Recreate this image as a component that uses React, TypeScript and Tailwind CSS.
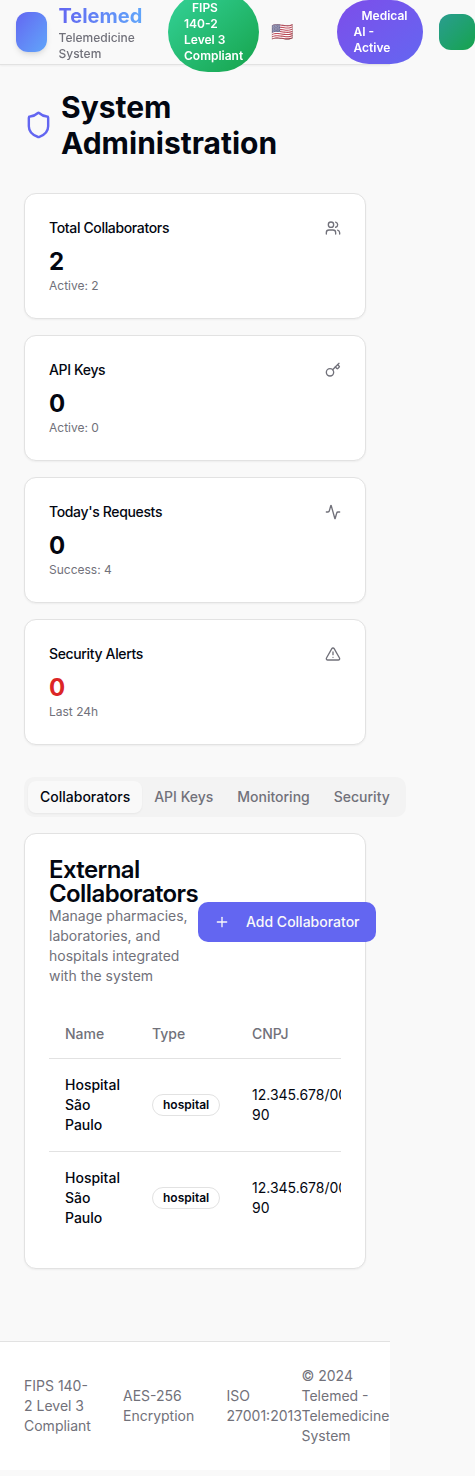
import React from 'react';
import { Activity, Key, Plus, Shield, TriangleAlert, Users, type LucideIcon } from 'lucide-react';

type Stat = { label: string; value: string; note: string; icon: LucideIcon; alert?: boolean };

const stats: Stat[] = [
  { label: 'Total Collaborators', value: '2', note: 'Active: 2', icon: Users },
  { label: 'API Keys', value: '0', note: 'Active: 0', icon: Key },
  { label: "Today's Requests", value: '0', note: 'Success: 4', icon: Activity },
  { label: 'Security Alerts', value: '0', note: 'Last 24h', icon: TriangleAlert, alert: true },
];

const tabs = ['Collaborators', 'API Keys', 'Monitoring', 'Security'];

const collaborators = [
  { id: 1, name: 'Hospital São Paulo', type: 'hospital', cnpj: '12.345.678/0001-90' },
  { id: 2, name: 'Hospital São Paulo', type: 'hospital', cnpj: '12.345.678/0001-90' },
];

function Header() {
  return (
    <header className="h-[65px] w-[390px] border-b border-[#e2e2e2] bg-[#f9f9f9]/95 shadow-[0_1px_2px_rgba(0,0,0,0.05)] backdrop-blur">
      <div className="flex h-16 w-[475px] items-center pl-4">
        <div className="h-10 w-[31px] shrink-0 rounded-xl bg-linear-to-br from-[#6366f1] to-[#60a5fa] shadow-md" />
        <div className="ml-[11.5px] w-[109.5px] shrink-0">
          <h1 className="w-max bg-linear-to-r from-[#6366f1] to-[#60a5fa] bg-clip-text text-xl font-bold text-transparent">
            Telemed
          </h1>
          <p className="w-[80px] text-xs font-medium text-[#71717a]">Telemedicine System</p>
        </div>
        <div className="w-[91px] shrink-0 rounded-[40px] bg-linear-to-br from-[#34d399] to-[#16a34a] px-4 py-2 text-xs font-semibold text-white">
          <span className="mr-2" />
          FIPS 140-2 Level 3 Compliant
        </div>
        <span className="ml-3 w-[66px] shrink-0 text-lg opacity-80">🇺🇸</span>
        <div className="w-[86px] shrink-0 rounded-[32px] bg-linear-to-br from-[#7c4dea] to-[#6366f1] py-2 pl-[16.5px] text-xs font-semibold text-white">
          <span className="mr-2" />
          Medical
          <br />
          AI -
          <br />
          Active
        </div>
        <div className="ml-4 size-9 shrink-0 rounded-xl bg-linear-to-br from-[#2a9d8f] to-[#16a34a]" />
      </div>
    </header>
  );
}

function StatCard({ stat }: { stat: Stat }) {
  const Icon = stat.icon;
  return (
    <div className="rounded-xl border border-[#e2e2e2] bg-white p-6 shadow-[0_1px_2px_rgba(0,0,0,0.05)]">
      <div className="flex items-center justify-between pb-2">
        <h3 className="text-sm font-medium tracking-tight">{stat.label}</h3>
        <Icon className="size-4 text-[#71717a]" />
      </div>
      <div className={stat.alert ? 'text-2xl font-bold text-[#dc2626]' : 'text-2xl font-bold'}>{stat.value}</div>
      <p className="text-xs text-[#71717a]">{stat.note}</p>
    </div>
  );
}

function Tabs() {
  return (
    <div className="mt-8 flex h-10 w-[382px] items-center rounded-[10px] bg-[#f3f3f3] p-1">
      {tabs.map((tab, i) => (
        <button
          key={tab}
          className={
            i === 0
              ? 'rounded-lg bg-[#f9f9f9] px-3 py-1.5 text-sm font-medium text-[#030711] shadow-[0_1px_2px_rgba(0,0,0,0.05)]'
              : 'rounded-lg px-3 py-1.5 text-sm font-medium text-[#71717a]'
          }
        >
          {tab}
        </button>
      ))}
    </div>
  );
}

function CollaboratorsCard() {
  return (
    <section className="mt-4 rounded-xl border border-[#e2e2e2] bg-white p-6 shadow-[0_1px_2px_rgba(0,0,0,0.05)]">
      <div className="flex items-center">
        <div className="w-[149px] shrink-0">
          <h3 className="text-2xl leading-none font-semibold tracking-tight">External Collaborators</h3>
          <p className="text-sm text-[#71717a]">Manage pharmacies, laboratories, and hospitals integrated with the system</p>
        </div>
        <button className="flex h-10 w-[178px] shrink-0 items-center gap-4 rounded-[10px] bg-[#6366f1] px-4 text-sm font-medium whitespace-nowrap text-[#f9f9f9]">
          <Plus className="size-4 shrink-0" />
          Add Collaborator
        </button>
      </div>
      <div className="mt-6 overflow-hidden">
        <table className="w-[520px] table-fixed text-left text-sm">
          <colgroup>
            <col className="w-[87px]" />
            <col className="w-[100px]" />
            <col />
          </colgroup>
          <thead>
            <tr className="border-b border-[#e2e2e2] text-[#71717a]">
              <th className="h-12 px-4 font-medium">Name</th>
              <th className="h-12 px-4 font-medium">Type</th>
              <th className="h-12 px-4 font-medium">CNPJ</th>
            </tr>
          </thead>
          <tbody>
            {collaborators.map((c) => (
              <tr key={c.id} className="border-b border-[#e2e2e2] last:border-0">
                <td className="p-4 font-medium">{c.name}</td>
                <td className="p-4">
                  <span className="inline-flex rounded-full border border-[#e2e2e2] px-2.5 py-0.5 text-xs font-semibold">{c.type}</span>
                </td>
                <td className="p-4">
                  <div className="w-[120px]">{c.cnpj}</div>
                </td>
              </tr>
            ))}
          </tbody>
        </table>
      </div>
    </section>
  );
}

function Footer() {
  return (
    <footer className="mt-12 flex w-[390px] items-center border-t border-[#e2e2e2] bg-white py-6 pl-6 text-sm text-[#71717a]">
      <span className="mr-8 w-[67px] shrink-0">FIPS 140-2 Level 3 Compliant</span>
      <span className="mr-8 w-[71.5px] shrink-0">AES-256 Encryption</span>
      <span className="w-[75px] shrink-0">ISO 27001:2013</span>
      <span className="w-[88.5px] shrink-0">© 2024 Telemed - Telemedicine System</span>
    </footer>
  );
}

export default function App() {
  return (
    <div className="min-h-[1476px] w-full overflow-hidden bg-[#f9f9f9] font-['Inter',sans-serif] text-[#030711]">
      <Header />
      <main className="w-[390px] p-6">
        <div className="mb-8 flex items-center gap-2">
          <Shield className="h-8 w-[29px] shrink-0 text-[#6366f1]" />
          <h1 className="text-3xl font-bold">System Administration</h1>
        </div>
        <div className="grid gap-4">
          {stats.map((stat) => (
            <StatCard key={stat.label} stat={stat} />
          ))}
        </div>
        <Tabs />
        <CollaboratorsCard />
      </main>
      <Footer />
    </div>
  );
}
